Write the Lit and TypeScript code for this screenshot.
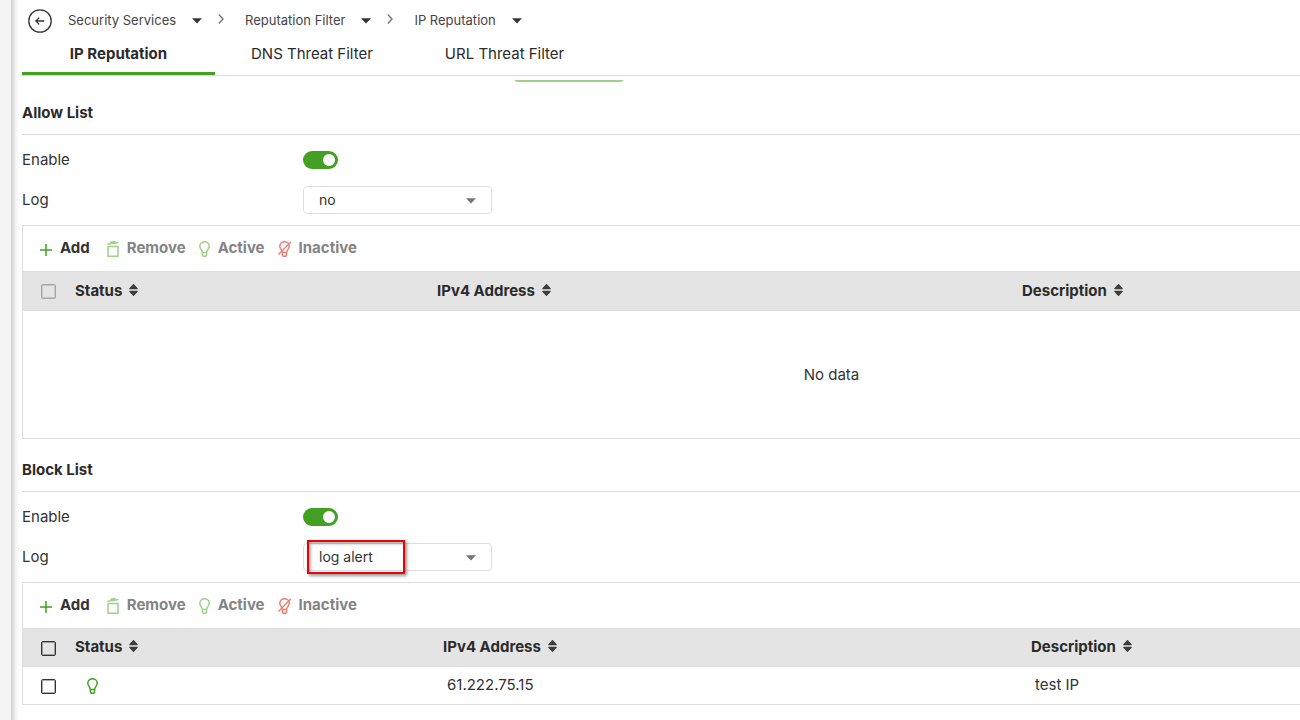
import { LitElement, html, css, svg, nothing } from "lit";
import { customElement, property } from "lit/decorators.js";
import { classMap } from "lit/directives/class-map.js";

interface Row {
  address: string;
  description: string;
}

interface ListConfig {
  id: string;
  title: string;
  log: string;
  columns: number[];
  rows: Row[];
  highlight: boolean;
}

const lists: ListConfig[] = [
  { id: "allow", title: "Allow List", log: "no", columns: [52, 362, 585], rows: [], highlight: false },
  {
    id: "block",
    title: "Block List",
    log: "log alert",
    columns: [52, 368, 588],
    rows: [{ address: "61.222.75.15", description: "test IP" }],
    highlight: true,
  },
];

const bulb = svg`
  <path d="M3.4 11.6 C3.4 9 0.8 8.2 0.8 5.2 A4.7 4.5 0 0 1 10.2 5.2 C10.2 8.2 7.6 9 7.6 11.6 Z M3.4 11.6 V13.6 Q3.4 15.3 4.9 15.3 H6.1 Q7.6 15.3 7.6 13.6 V11.6"/>`;

const icons = {
  add: html`<svg class="icon green" width="12" height="16" viewBox="0 0 12 16" aria-hidden="true"><path d="M6 3 V15 M0 9 H12"/></svg>`,
  remove: html`<svg class="icon pale" width="12" height="16" viewBox="0 0 12 16" aria-hidden="true"><path d="M1 5.5 H11 V15.3 H1 Z M0.4 3.2 L11.4 1.4 M4.2 2.4 L4 1.2 L7.8 0.7 L8 1.8"/></svg>`,
  active: html`<svg class="icon pale" width="11" height="16" viewBox="0 0 11 16" aria-hidden="true">${bulb}</svg>`,
  status: html`<svg class="icon green" width="11" height="16" viewBox="0 0 11 16" role="img" aria-label="Active">${bulb}</svg>`,
  inactive: html`<svg class="icon red" width="13" height="16" viewBox="0 0 13 16" aria-hidden="true"><g transform="translate(1 0)">${bulb}</g><path d="M0.4 13.6 L12.8 0.9"/></svg>`,
};

const caret = (cls: string) =>
  html`<svg class=${cls} width="10" height="6" viewBox="0 0 10 6" aria-hidden="true"><path d="M0 0.3 H10 L5 5.4 Z"/></svg>`;

const sortIcon = html`<svg width="9" height="12" viewBox="0 0 9 12" aria-hidden="true"><path d="M4.5 0.7 L8.2 4.6 H0.8 Z M0.8 7.4 H8.2 L4.5 11.3 Z" fill="#3c3c3c" stroke="#3c3c3c" stroke-width="1.2" stroke-linejoin="round"/></svg>`;

@customElement("filter-list")
export class FilterList extends LitElement {
  @property({ attribute: false }) config!: ListConfig;

  static styles = css`
    :host {
      display: block;
    }
    * {
      box-sizing: border-box;
    }
    h2 {
      margin: 0;
      padding: 21px 0 11px;
      border-bottom: 1px solid #dcdcdc;
      font-size: 15px;
      line-height: 20px;
      font-weight: 700;
      color: #2b2b2b;
    }
    .fields {
      padding: 5px 0;
    }
    .field {
      display: grid;
      grid-template-columns: 281px 1fr;
      align-items: center;
      height: 40px;
    }
    .switch {
      appearance: none;
      display: flex;
      align-items: center;
      justify-content: flex-end;
      width: 35px;
      height: 18px;
      margin: 0;
      padding: 0 3px;
      border-radius: 9px;
      background: #43a023;
    }
    .switch::before {
      content: "";
      width: 12px;
      height: 12px;
      border-radius: 50%;
      background: #fff;
    }
    .picker {
      position: relative;
      display: grid;
      width: 189px;
      align-items: center;
    }
    .picker > * {
      grid-area: 1 / 1;
    }
    select {
      appearance: none;
      width: 100%;
      height: 28px;
      padding: 0 15px;
      border: 1px solid #dedede;
      border-radius: 4px;
      background: #fff;
      color: #333;
      font: 14px / 20px Inter, sans-serif;
    }
    .arrow {
      justify-self: end;
      margin: 1px 16px 0 0;
      fill: #757575;
      pointer-events: none;
    }
    .mark {
      position: absolute;
      left: 4px;
      top: -3px;
      width: 98px;
      height: 34px;
      border: 2px solid #f00000;
      box-shadow: 2px 2px 3px rgba(0, 0, 0, 0.4), inset 2px 2px 3px rgba(0, 0, 0, 0.3);
      pointer-events: none;
    }
    .panel {
      min-width: 1619px;
      border: 1px solid #dedede;
    }
    .tools {
      display: flex;
      align-items: center;
      height: 45px;
      padding: 0 17px 2px;
      gap: 13px;
    }
    .tool {
      display: flex;
      align-items: center;
      gap: 8px;
      margin: 0;
      padding: 0;
      border: 0;
      background: none;
      font: 700 15px / 20px Inter, sans-serif;
      color: #333;
    }
    .tool + .tool {
      color: #848484;
    }
    .tool:first-child {
      margin-right: 4px;
    }
    .icon {
      display: block;
      fill: none;
      stroke-width: 1.5;
    }
    .tool .icon {
      margin-top: 2px;
    }
    .green {
      stroke: #43a023;
    }
    .pale {
      stroke: #9fd088;
    }
    .red {
      stroke: #ea7f74;
    }
    table {
      width: 100%;
      table-layout: fixed;
      border-collapse: collapse;
      font-size: 15px;
      line-height: 20px;
      color: #333;
    }
    th,
    td {
      padding: 0;
      text-align: left;
      vertical-align: middle;
    }
    th {
      height: 39px;
      background: #e4e4e4;
      font-weight: 700;
      color: #2b2b2b;
      box-shadow: inset 0 1px #dedede, inset 0 -1px #dedede;
    }
    .vacant th {
      height: 40px;
    }
    td {
      height: 37px;
      padding: 0 0 1px 4px;
    }
    td.bulb {
      padding: 1px 0 0 12px;
    }
    td.none {
      height: 127px;
      padding: 0;
      text-align: center;
    }
    th.tick,
    td.tick {
      padding: 0 0 0 18px;
    }
    .sort {
      display: flex;
      align-items: center;
      gap: 7px;
      padding: 0 0 1px;
      border: 0;
      background: none;
      font: inherit;
      color: inherit;
    }
    .sort svg {
      margin-bottom: 2px;
    }
    .check {
      appearance: none;
      display: block;
      width: 15px;
      height: 15px;
      margin: 1px 0 0;
      border: 1px solid #333;
      border-radius: 2px;
      box-shadow: inset 0 0 0 1px rgba(51, 51, 51, 0.4);
    }
    .check:disabled {
      border-color: #a6a6a6;
      box-shadow: inset 0 0 0 1px rgba(130, 130, 130, 0.3);
    }
  `;

  render() {
    const { id, title, log, columns, rows, highlight } = this.config;
    return html`
      <h2>${title}</h2>
      <div class="fields">
        <div class="field">
          <label for="${id}-enable">Enable</label>
          <input class="switch" id="${id}-enable" type="checkbox" role="switch" checked />
        </div>
        <div class="field">
          <label for="${id}-log">Log</label>
          <div class="picker">
            <select id="${id}-log">
              <option>${log}</option>
            </select>
            ${caret("arrow")} ${highlight ? html`<span class="mark"></span>` : nothing}
          </div>
        </div>
      </div>
      <div class="panel">
        <div class="tools">
          <button class="tool">${icons.add}Add</button>
          <button class="tool" disabled>${icons.remove}Remove</button>
          <button class="tool" disabled>${icons.active}Active</button>
          <button class="tool" disabled>${icons.inactive}Inactive</button>
        </div>
        <table class=${classMap({ vacant: !rows.length })}>
          <colgroup>
            ${columns.map((w) => html`<col style="width:${w}px" />`)}
            <col />
          </colgroup>
          <thead>
            <tr>
              <th class="tick">
                <input class="check" type="checkbox" aria-label="Select all" ?disabled=${!rows.length} />
              </th>
              ${["Status", "IPv4 Address", "Description"].map(
                (name) => html`<th><button class="sort">${name}${sortIcon}</button></th>`
              )}
            </tr>
          </thead>
          <tbody>
            ${rows.length
              ? rows.map(
                  (row) => html`<tr>
                    <td class="tick"><input class="check" type="checkbox" aria-label="Select row" /></td>
                    <td class="bulb">${icons.status}</td>
                    <td>${row.address}</td>
                    <td>${row.description}</td>
                  </tr>`
                )
              : html`<tr><td class="none" colspan="4">No data</td></tr>`}
          </tbody>
        </table>
      </div>
    `;
  }
}

@customElement("app-root")
export class AppRoot extends LitElement {
  static styles = css`
    :host {
      display: flex;
      min-height: 100vh;
      overflow: hidden;
      background: #fff;
      color: #333;
      font: 15px / 20px Inter, sans-serif;
    }
    * {
      box-sizing: border-box;
    }
    .rail {
      flex: none;
      width: 11px;
      background: #f4f4f4;
    }
    .page {
      flex: 1;
      min-width: 0;
      overflow: hidden;
      padding-left: 11px;
      background: linear-gradient(to right, #cecece, #e6e6e6 3px, #f8f8f8 6px, #fff 10px);
      background-color: #fff;
    }
    .crumbs {
      display: flex;
      align-items: center;
      height: 40px;
      padding-left: 6px;
      font-size: 13px;
    }
    .back {
      display: block;
      margin: 2px 16px 0 0;
      padding: 0;
      border: 0;
      background: none;
    }
    .back svg,
    .step svg {
      display: block;
    }
    .ring {
      fill: none;
      stroke: #333;
      stroke-width: 1.3;
    }
    .crumb {
      display: flex;
      align-items: center;
      gap: 16px;
      padding: 0;
      border: 0;
      background: none;
      font: inherit;
      color: #444;
    }
    .down {
      margin-top: 2px;
      fill: #333;
    }
    .step {
      margin: 0 21px 3px 16px;
    }
    .tabs {
      display: flex;
      height: 36px;
      border-bottom: 1px solid #dcdcdc;
    }
    .tab {
      padding: 4px 36px 0;
      text-align: center;
      text-decoration: none;
      color: #2b2b2b;
    }
    .current {
      min-width: 193px;
      font-weight: 700;
      border-bottom: 3px solid #43a023;
    }
    .scrolled {
      display: flex;
      align-items: flex-end;
      height: 2px;
      margin: 4px 0 0 492px;
      overflow: hidden;
    }
    .edge {
      flex: none;
      width: 110px;
      height: 32px;
      border-radius: 4px;
      background: #9fd088;
    }
  `;

  render() {
    const crumbs = ["Security Services", "Reputation Filter", "IP Reputation"];
    const tabs = ["IP Reputation", "DNS Threat Filter", "URL Threat Filter"];
    return html`
      <div class="rail"></div>
      <main class="page">
        <nav class="crumbs" aria-label="Breadcrumb">
          <button class="back" aria-label="Back">
            <svg width="24" height="24" viewBox="0 0 24 24">
              <circle class="ring" cx="12" cy="12" r="11.2" />
              <path class="ring" d="M16.3 12 H7.8 M11.3 8.6 L7.8 12 L11.3 15.4" />
            </svg>
          </button>
          ${crumbs.map(
            (name, i) => html`
              ${i
                ? html`<span class="step"
                    ><svg width="6" height="10" viewBox="0 0 6 10">
                      <path d="M0.8 0.6 L5 5 L0.8 9.4" fill="none" stroke="#777" stroke-width="1.4" /></svg
                  ></span>`
                : nothing}
              <button class="crumb">${name}${caret("down")}</button>
            `
          )}
        </nav>
        <nav class="tabs" aria-label="Filters">
          ${tabs.map((name, i) => html`<a class=${classMap({ tab: true, current: i === 0 })} href="#">${name}</a>`)}
        </nav>
        <div class="scrolled"><div class="edge"></div></div>
        ${lists.map((list) => html`<filter-list .config=${list}></filter-list>`)}
      </main>
    `;
  }
}
